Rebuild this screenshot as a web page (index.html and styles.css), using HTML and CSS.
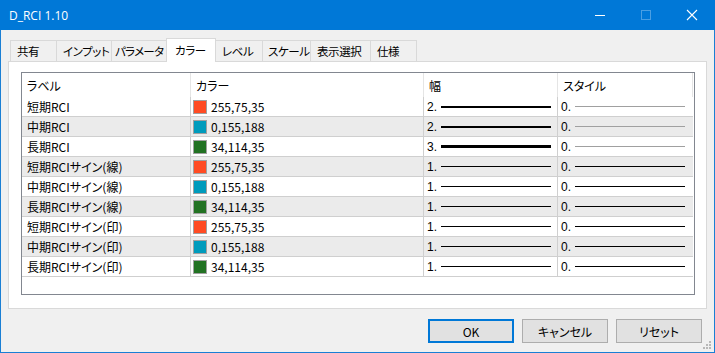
FILE: index.html
```html
<!DOCTYPE html>
<html lang="ja">
<head>
    <meta charset="UTF-8">
    <title>D_RCI 1.10</title>
    <link rel="stylesheet" href="styles.css">
</head>
<body>
    <div class="window">
        <div class="titlebar">
            <span class="title">D_RCI 1.10</span>
            <div class="controls">
                <svg width="46" height="30" class="ctl"><line x1="18" y1="15.5" x2="28" y2="15.5" stroke="#fff" stroke-width="1"/></svg>
                <svg width="46" height="30" class="ctl"><rect x="18.5" y="10.5" width="9" height="9" fill="none" stroke="#4a9fe3" stroke-width="1"/></svg>
                <svg width="46" height="30" class="ctl"><path d="M18 10 L28 20 M28 10 L18 20" stroke="#fff" stroke-width="1.1"/></svg>
            </div>
        </div>

        <div class="tabs">
            <div class="tab">共有</div>
            <div class="tab">インプット</div>
            <div class="tab">パラメータ</div>
            <div class="tab active">カラー</div>
            <div class="tab">レベル</div>
            <div class="tab">スケール</div>
            <div class="tab">表示選択</div>
            <div class="tab">仕様</div>
        </div>

        <div class="panel">
            <div class="list">
                <div class="row head">
                    <div class="cell">ラベル</div>
                    <div class="cell">カラー</div>
                    <div class="cell">幅</div>
                    <div class="cell last">スタイル</div>
                </div>

                <div class="row">
                    <div class="cell">短期RCI</div>
                    <div class="cell"><span class="swatch orange"></span>255,75,35</div>
                    <div class="cell num">2.<span class="line w2"></span></div>
                    <div class="cell num">0.<span class="line thin"></span></div>
                </div>
                <div class="row alt">
                    <div class="cell">中期RCI</div>
                    <div class="cell"><span class="swatch blue"></span>0,155,188</div>
                    <div class="cell num">2.<span class="line w2"></span></div>
                    <div class="cell num">0.<span class="line thin"></span></div>
                </div>
                <div class="row">
                    <div class="cell">長期RCI</div>
                    <div class="cell"><span class="swatch green"></span>34,114,35</div>
                    <div class="cell num">3.<span class="line w3"></span></div>
                    <div class="cell num">0.<span class="line thin"></span></div>
                </div>
                <div class="row alt">
                    <div class="cell">短期RCIサイン(線)</div>
                    <div class="cell"><span class="swatch orange"></span>255,75,35</div>
                    <div class="cell num">1.<span class="line"></span></div>
                    <div class="cell num">0.<span class="line"></span></div>
                </div>
                <div class="row">
                    <div class="cell">中期RCIサイン(線)</div>
                    <div class="cell"><span class="swatch blue"></span>0,155,188</div>
                    <div class="cell num">1.<span class="line"></span></div>
                    <div class="cell num">0.<span class="line"></span></div>
                </div>
                <div class="row alt">
                    <div class="cell">長期RCIサイン(線)</div>
                    <div class="cell"><span class="swatch green"></span>34,114,35</div>
                    <div class="cell num">1.<span class="line"></span></div>
                    <div class="cell num">0.<span class="line"></span></div>
                </div>
                <div class="row">
                    <div class="cell">短期RCIサイン(印)</div>
                    <div class="cell"><span class="swatch orange"></span>255,75,35</div>
                    <div class="cell num">1.<span class="line"></span></div>
                    <div class="cell num">0.<span class="line"></span></div>
                </div>
                <div class="row alt">
                    <div class="cell">中期RCIサイン(印)</div>
                    <div class="cell"><span class="swatch blue"></span>0,155,188</div>
                    <div class="cell num">1.<span class="line"></span></div>
                    <div class="cell num">0.<span class="line"></span></div>
                </div>
                <div class="row">
                    <div class="cell">長期RCIサイン(印)</div>
                    <div class="cell"><span class="swatch green"></span>34,114,35</div>
                    <div class="cell num">1.<span class="line"></span></div>
                    <div class="cell num">0.<span class="line"></span></div>
                </div>
            </div>
        </div>

        <div class="buttons">
            <button class="btn default">OK</button>
            <button class="btn">キャンセル</button>
            <button class="btn">リセット</button>
        </div>

        <svg class="grip" width="9" height="9">
            <rect x="6" y="0" width="2" height="2" fill="#b8b8b8"/>
            <rect x="3" y="3" width="2" height="2" fill="#b8b8b8"/>
            <rect x="6" y="3" width="2" height="2" fill="#b8b8b8"/>
            <rect x="0" y="6" width="2" height="2" fill="#b8b8b8"/>
            <rect x="3" y="6" width="2" height="2" fill="#b8b8b8"/>
            <rect x="6" y="6" width="2" height="2" fill="#b8b8b8"/>
        </svg>
    </div>
</body>
</html>
```

FILE: styles.css
```css
body {
    margin: 0;
    font-family: "Noto Sans CJK JP", sans-serif;
    font-size: 12px;
    color: #000;
}
.window {
    position: relative;
    width: 715px;
    height: 353px;
    box-sizing: border-box;
    background: #f0f0f0;
    border: 1px solid #1a7fd4;
    border-top: none;
    display: flex;
    flex-direction: column;
    font-feature-settings: "palt";
}
.titlebar {
    height: 30px;
    margin: 0 -1px;
    background: #0078d7;
    color: #fff;
    display: flex;
    align-items: center;
    justify-content: space-between;
    flex-shrink: 0;
}
.title {
    font-family: "Open Sans", sans-serif;
    font-size: 12px;
    padding-left: 9px;
}
.controls {
    display: flex;
}
.ctl {
    display: block;
}

/* tabs */
.tabs {
    display: flex;
    align-items: flex-end;
    margin: 8px 0 0 9px;
    height: 23px;
    position: relative;
    z-index: 1;
}
.tab {
    height: 21px;
    box-sizing: border-box;
    border: 1px solid #d9d9d9;
    border-bottom: none;
    border-left: none;
    background: #f0f0f0;
    padding: 2px 0 0 6px;
    line-height: 17px;
    white-space: nowrap;
    font-size: 11.5px;
    letter-spacing: -0.4px;
    overflow: hidden;
}
.tab:first-child {
    border-left: 1px solid #d9d9d9;
}
.tab:nth-child(1) { width: 47px; }
.tab:nth-child(2) { width: 55px; padding-left: 6px; }
.tab:nth-child(3) { width: 55px; padding-left: 3px; letter-spacing: -0.7px; }
.tab:nth-child(4) { width: 50px; }
.tab:nth-child(5) { width: 47px; }
.tab:nth-child(6) { width: 48px; padding-left: 5px; }
.tab:nth-child(7) { width: 60px; }
.tab:nth-child(8) { width: 46px; }
.tab.active {
    height: 24px;
    margin-bottom: -1px;
    background: #fff;
    border-left: 1px solid #d9d9d9;
    margin-left: -1px;
    padding-left: 8px;
    padding-top: 3px;
}

/* panel */
.panel {
    margin: 0 7px;
    height: 248px;
    box-sizing: border-box;
    background: #fff;
    border: 1px solid #d9d9d9;
    padding: 10px 11px 0 12px;
}
.list {
    height: 223px;
    box-sizing: border-box;
    border: 1px solid #828790;
    background: #fff;
}
.row {
    display: grid;
    grid-template-columns: 169px 233px 134px 135px;
    height: 20px;
    box-sizing: border-box;
    border-bottom: 1px solid #cfcfcf;
    margin-right: 1px;
}
.row.alt {
    background: #ebebeb;
}
.row.head {
    height: 24px;
    border-bottom: none;
    background: #fff;
}
.cell {
    border-right: 1px solid #cfcfcf;
    padding-left: 5px;
    display: flex;
    align-items: center;
    white-space: nowrap;
    overflow: hidden;
}
.row .cell:last-child {
    border-right: none;
}
.head .cell {
    border-right-color: #e5e5e5;
}
.head .cell.last {
    border-right: 1px solid #e5e5e5;
}
.swatch {
    width: 12px;
    height: 12px;
    border: 1px solid #a0a0a0;
    margin: 0 4px 0 -3px;
    flex-shrink: 0;
}
.orange { background: #ff4b23; }
.blue { background: #009bbc; }
.green { background: #227223; }
.num {
    font-family: "Liberation Sans", sans-serif;
    font-size: 12px;
    padding-left: 3px;
}
.line {
    display: block;
    width: 110px;
    height: 1px;
    margin-left: 4px;
    background: #000;
}
.line.w2 { height: 2px; }
.line.w3 { height: 3px; }
.line.thin { background: #a0a0a0; }

/* buttons */
.buttons {
    display: flex;
    justify-content: flex-end;
    gap: 8px;
    margin: 10px 12px 0 0;
}
.btn {
    width: 86px;
    height: 24px;
    background: #e1e1e1;
    border: 1px solid #adadad;
    font-family: "Noto Sans CJK JP", sans-serif;
    font-feature-settings: "palt";
    font-size: 12px;
    padding: 0;
    color: #000;
}
.btn.default {
    border: 2px solid #0078d7;
}
.grip {
    position: absolute;
    right: 2px;
    bottom: 2px;
}
```
